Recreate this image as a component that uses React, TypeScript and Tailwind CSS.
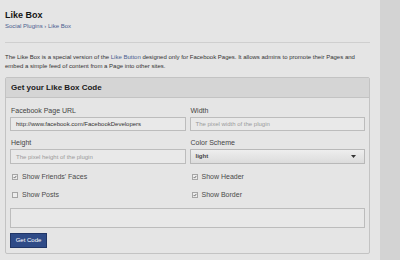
import React from "react"

const font = { fontFamily: '"Liberation Sans", Arial, sans-serif' }

function Check({ checked }: { checked: boolean }) {
  return (
    <span className="w-[6px] h-[6px] border border-[#a5a5a5] bg-[#ededed] flex items-center justify-center shrink-0">
      {checked && (
        <svg width="6" height="6" viewBox="0 0 6 6" className="-mt-[1px]">
          <path d="M1 3.2 L2.4 4.6 L5 1.4" fill="none" stroke="#333" strokeWidth="1" />
        </svg>
      )}
    </span>
  )
}

function CheckRow({ label, checked }: { label: string; checked: boolean }) {
  return (
    <div className="flex items-center gap-[4px] h-[10px] pl-[2px] text-[7px] leading-[10px] text-[#4a4a4a]">
      <Check checked={checked} />
      <span>{label}</span>
    </div>
  )
}

function Field({ label, children }: { label: string; children: React.ReactNode }) {
  return (
    <div className="flex flex-col">
      <div className="text-[7px] leading-[9px] text-[#444] mb-[2px] pl-[1px]">{label}</div>
      {children}
    </div>
  )
}

function TextBox({ value, placeholder, h = "h-[14px]" }: { value?: string; placeholder?: string; h?: string }) {
  return (
    <div
      className={`${h} border border-[#bcbcbc] bg-[#e9e9e9] px-[5px] flex items-center text-[6px] leading-[8px] whitespace-nowrap overflow-hidden ${
        value ? "text-[#333]" : "text-[#9a9a9a]"
      }`}
    >
      {value ?? placeholder}
    </div>
  )
}

export default function App() {
  return (
    <div className="w-[400px] h-[260px] flex bg-[#e5e5e5] overflow-hidden" style={font}>
      <div className="w-[380px] pl-[5px] pr-[10px] shrink-0">
        <div className="pt-[9px] text-[9px] font-bold leading-[12px] text-[#151515]">Like Box</div>
        <div className="mt-[1px] text-[6px] leading-[8px] text-[#4b5d8f]">Social Plugins › Like Box</div>
        <div className="mt-[12px] border-t border-[#cfcfcf]" />
        <div className="mt-[10px] text-[6px] leading-[9px] text-[#333]">
          <div className="flex whitespace-pre">
            <span>The Like Box is a special version of the </span>
            <span className="text-[#4b5d8f]">Like Button</span>
            <span> designed only for Facebook Pages. It allows admins to promote their Pages and</span>
          </div>
          <div>embed a simple feed of content from a Page into other sites.</div>
        </div>
        <div className="mt-[6px] border border-[#c3c3c3] rounded-[2px] bg-[#e5e5e5]">
          <div className="h-[20px] bg-[#d5d5d5] border-b border-[#c3c3c3] flex items-center pl-[5px] text-[8px] font-bold text-[#1b1b1b]">
            Get your Like Box Code
          </div>
          <div className="px-[4px] pt-[8px] pb-[5px]">
            <div className="grid grid-cols-2 gap-x-[4px] gap-y-[7px]">
              <Field label="Facebook Page URL">
                <TextBox value="http://www.facebook.com/FacebookDevelopers" />
              </Field>
              <Field label="Width">
                <TextBox placeholder="The pixel width of the plugin" />
              </Field>
              <Field label="Height">
                <TextBox placeholder="The pixel height of the plugin" h="h-[15px]" />
              </Field>
              <Field label="Color Scheme">
                <div className="h-[15px] border border-[#b8b8b8] bg-gradient-to-b from-[#eeeeee] to-[#dcdcdc] pl-[5px] pr-[8px] flex items-center justify-between text-[6px] font-bold text-[#444]">
                  <span>light</span>
                  <svg width="5" height="3" viewBox="0 0 5 3">
                    <path d="M0 0 L5 0 L2.5 3 Z" fill="#333" />
                  </svg>
                </div>
              </Field>
            </div>
            <div className="grid grid-cols-2 gap-x-[4px] gap-y-[8px] mt-[8px]">
              <CheckRow label="Show Friends' Faces" checked />
              <CheckRow label="Show Header" checked />
              <CheckRow label="Show Posts" checked={false} />
              <CheckRow label="Show Border" checked />
            </div>
            <div className="mt-[8px] h-[20px] border border-[#bcbcbc] bg-[#e8e8e8]" />
            <button className="mt-[5px] h-[15px] w-[37px] bg-[#2f4b87] border border-[#203566] text-white text-[6px] leading-[13px] flex items-center justify-center">
              Get Code
            </button>
          </div>
        </div>
      </div>
      <div className="flex-1 bg-[#d3d3d3]" />
    </div>
  )
}
